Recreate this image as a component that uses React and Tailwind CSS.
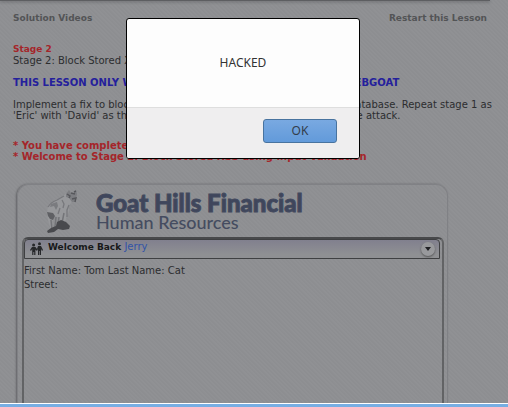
import React from 'react';

function Goat() {
  return (
    <svg viewBox="0 0 36 46" className="h-[46px] w-9 shrink-0" aria-label="Goat Hills Financial goat" role="img">
      <path d="M4 17 C6 13 11 11 16 9 L23 4 L28 3 L29 11 L25 17 L25 22 L22 30 L20 36 L16 37 L15 29 L11 27 L8 33 L9 40 L7 41 L4 31 L3 24 Z" fill="#97989b" />
      <path d="M22 5 L25 1 L27 4 L30 4 L32 1 L33 5 L32 10 L31 13 L28 13 L25 9 L22 8 Z" fill="#7c7d81" />
      <path d="M23 5 L26 7 L25 9 M30 3 L32 2 M28 10 L32 9 L31 13 M27 4 L31 5" stroke="#56575b" strokeWidth="1.4" fill="none" />
      <path d="M4 18 Q7 13 13 11 L20 7 M16 19 L14 25 M25 16 L23 21 L23 28 M18 11 L20 15 L19 19" stroke="#77787c" strokeWidth="1.3" fill="none" />
      <path d="M7 15 L13 13 L14 17 L12 21 L10 17 L6 18 Z" fill="#7a7b7f" />
      <path d="M3 23 L9 24 L11 27 L9 31 L6 30 L4 27 Z" fill="#5f6064" />
      <path d="M7 31 L8 41 M12 28 L11 38 M15 28 L14 36 M20 24 L18 34" stroke="#737478" strokeWidth="1.5" fill="none" />
      <path d="M12 37 L13 33 L17 31 L22 33 L26 37 L25 40 L19 41 L14 40 L10 43 L4 44 L3 42 L7 39 Z" fill="#48494d" />
    </svg>
  );
}

function People() {
  return (
    <svg viewBox="0 0 13 14" className="h-3.5 w-[13px] shrink-0" aria-hidden="true">
      <circle cx="3.6" cy="3" r="1.5" fill="#26272a" />
      <circle cx="9.5" cy="1.7" r="1.5" fill="#26272a" />
      <path d="M2 5 H5.4 L7 7 L8 4 H11 L13 8 L12 9 L11 7 V13 H9.8 V9 H9.2 V13 H8 V7 L7 9 L5.4 7.5 V13 H4.2 V10 H3.4 V13 H2.2 V7 L1 9 L0 8 Z" fill="#26272a" />
    </svg>
  );
}

function Alert() {
  return (
    <div role="alertdialog" aria-label="HACKED" className="absolute left-1/2 top-[18px] -ml-32 flex h-[141px] w-[234px] flex-col overflow-hidden rounded-[3px] border border-black bg-[#fdfdfd] font-['Noto_Sans',sans-serif] text-xs text-[#333]">
      <p className="flex h-[88px] items-center justify-center">HACKED</p>
      <div className="flex flex-1 items-start justify-end border-t border-[#dedede] bg-[#efeeef] px-[22px] pt-[11px]">
        <button className="h-6 w-[74px] rounded-[3px] border border-[#48739f] bg-linear-to-b from-[#79a9e1] to-[#629ada] leading-5 text-[#333d4a]">OK</button>
      </div>
    </div>
  );
}

export default function App() {
  return (
    <div className="relative flex h-screen flex-col overflow-hidden bg-[#8e8f92] bg-[repeating-linear-gradient(45deg,#8d8e91_0px,#8d8e91_1px,#909194_2px,#909194_3px)] font-['DejaVu_Sans',sans-serif] text-[10px] leading-[11px] text-[#2c2d2f]">
      <div className="mr-[18px] h-px shrink-0 bg-[#5d5e61] shadow-[0_1px_3px_#55565a]" />
      <main className="flex min-h-0 flex-1 flex-col px-[13px] pt-3">
        <nav className="flex justify-between pr-2 text-[9px] font-bold text-[#535456]">
          <a href="#videos">Solution Videos</a>
          <a href="#restart">Restart this Lesson</a>
        </nav>
        <h2 className="mt-5 text-[9px] font-bold text-[#a5252a]">Stage 2</h2>
        <p className="whitespace-nowrap">Stage 2: Block Stored XSS using Input Validation.</p>
        <p className="mt-[11px] whitespace-nowrap font-bold text-[#24209c]">THIS LESSON ONLY WORKS WITH DEVELOPER VERSION OF WEBGOAT</p>
        <p className="mt-[11px] whitespace-nowrap">
          Implement a fix to block stored XSS before it can be written to the database. Repeat stage 1 as
          <br />
          'Eric' with 'David' as the manager. Verify 'David' is not affected by the attack.
        </p>
        <div className="mt-[19px] whitespace-nowrap font-bold text-[#a5252a]">
          <p>* You have completed Stage 1: Stored XSS.</p>
          <p>* Welcome to Stage 2: Block Stored XSS using Input Validation</p>
        </div>
        <section className="ml-1 mr-[47px] mt-[22px] flex min-h-0 flex-1 flex-col rounded-t-xl border border-b-0 border-[#808185] pl-1 pr-[3px] pt-1 shadow-[-1px_0_2px_#636467]">
          <header className="flex h-12 shrink-0 gap-4 pl-[22px]">
            <Goat />
            <div className="whitespace-nowrap font-['Lato',sans-serif] text-[#454c60]">
              <h1 className="pt-[3px] text-2xl font-black leading-[22px] text-[#3f465c] [-webkit-text-stroke:1px_#434a5e]">Goat Hills Financial</h1>
              <p className="text-lg font-medium leading-4">Human Resources</p>
            </div>
          </header>
          <div className="flex min-h-0 flex-1 flex-col rounded-t-md border-2 border-b-0 border-[#626365] border-t-[#48494b]">
            <div className="mr-0.5 flex h-5 shrink-0 items-center rounded-t-sm border border-[#3f4042] bg-linear-to-b from-[#81808e] to-[#8f9093] to-80% pl-[5px] pr-1">
              <People />
              <p className="ml-[5px] pb-1 text-[#17181a]">
                <b className="text-[9px]">Welcome Back</b> <a href="#jerry" className="text-[#3153a7]">Jerry</a>
              </p>
              <button aria-label="Open menu" className="ml-auto flex size-3.5 items-center justify-center rounded-full bg-[#98999c] shadow-[0_1px_2px_#555]">
                <svg viewBox="0 0 6 4" className="h-1 w-1.5"><path d="M0 0H6L3 4Z" fill="#202124" /></svg>
              </button>
            </div>
            <div className="pt-[5px] leading-[14px]">
              <p>First Name: Tom Last Name: Cat</p>
              <p>Street:</p>
            </div>
          </div>
        </section>
      </main>
      <footer className="h-1 shrink-0 border-t border-white bg-[#77aee3]" />
      <Alert />
    </div>
  );
}
